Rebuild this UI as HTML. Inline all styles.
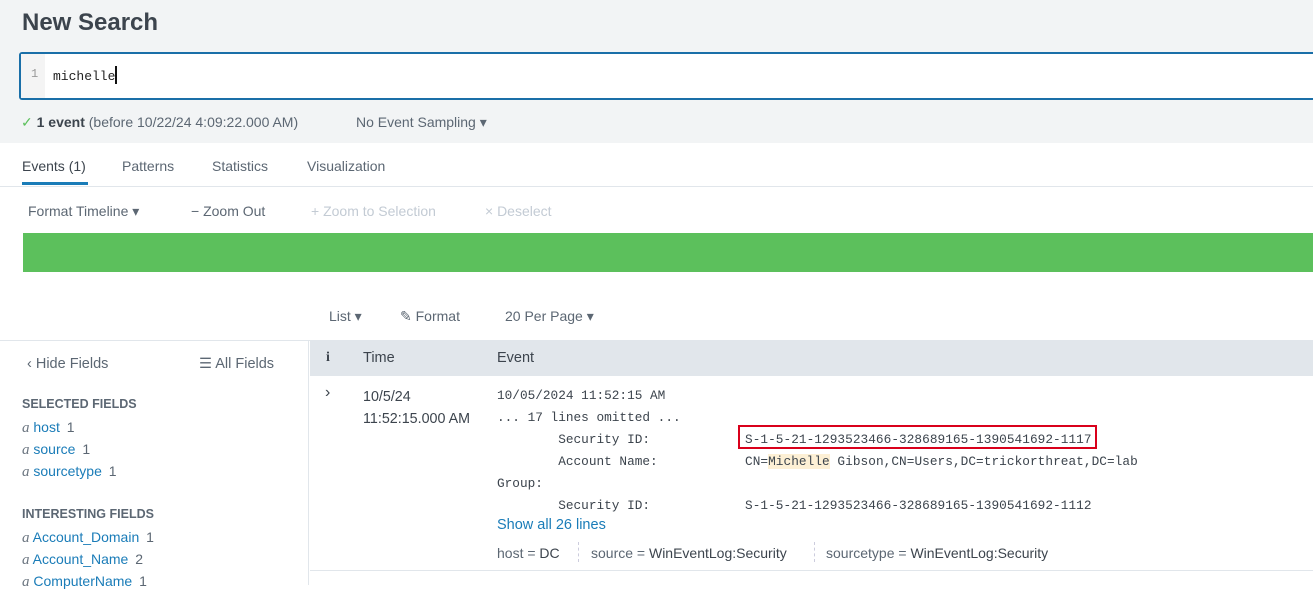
<!DOCTYPE html>
<html><head><meta charset="utf-8"><style>
*{margin:0;padding:0;box-sizing:border-box}
body{width:1313px;height:585px;overflow:hidden;background:#fff;font-family:"Liberation Sans",sans-serif;color:#3c444d;position:relative}
.a{position:absolute;white-space:nowrap}
.mono{font-family:"Liberation Mono",monospace;font-size:12.85px;color:#3c444d}
.link{color:#1a7cb8}
.ai{font-family:"Liberation Serif",serif;font-style:italic;color:#6b7580;font-size:15px}
.c{color:#5c6773;margin-left:3px}
</style></head><body>
<div class="a" style="left:0;top:0;width:1313px;height:143px;background:#f2f4f5"></div>
<div class="a" style="left:22px;top:9px;font-size:24px;font-weight:bold;color:#3c444d">New Search</div>
<div class="a" style="left:19px;top:52px;width:1300px;height:48px;background:#fff;border:2px solid #1a6fa8;border-radius:3px"></div>
<div class="a" style="left:21px;top:54px;width:24px;height:44px;background:#f4f4f4"></div>
<div class="a mono" style="left:31px;top:67px;color:#999;font-size:12px">1</div>
<div class="a mono" style="left:53px;top:66px;font-size:13px;color:#222">michelle<span style="display:inline-block;width:2px;height:18px;background:#111;vertical-align:-4px"></span></div>
<div class="a" style="left:21px;top:114px;font-size:14px;color:#5c6773"><span style="color:#5cc05c">✓</span> <b style="color:#3c444d">1 event</b> (before 10/22/24 4:09:22.000 AM)</div>
<div class="a" style="left:356px;top:114px;font-size:14px;color:#5c6773">No Event Sampling ▾</div>
<div class="a" style="left:22px;top:158px;font-size:14px;color:#3c444d">Events (1)</div>
<div class="a" style="left:22px;top:182px;width:66px;height:3px;background:#1a7cb8"></div>
<div class="a" style="left:122px;top:158px;font-size:14px;color:#5c6773">Patterns</div>
<div class="a" style="left:212px;top:158px;font-size:14px;color:#5c6773">Statistics</div>
<div class="a" style="left:307px;top:158px;font-size:14px;color:#5c6773">Visualization</div>
<div class="a" style="left:0;top:186px;width:1313px;height:1px;background:#e1e6eb"></div>
<div class="a" style="left:28px;top:203px;font-size:14px;color:#5c6773">Format Timeline ▾</div>
<div class="a" style="left:191px;top:203px;font-size:14px;color:#5c6773">− Zoom Out</div>
<div class="a" style="left:311px;top:203px;font-size:14px;color:#c3cbd4">+ Zoom to Selection</div>
<div class="a" style="left:485px;top:203px;font-size:14px;color:#c3cbd4">× Deselect</div>
<div class="a" style="left:23px;top:233px;width:1290px;height:39px;background:#5cc05c"></div>
<div class="a" style="left:329px;top:308px;font-size:14px;color:#5c6773">List ▾</div>
<div class="a" style="left:400px;top:308px;font-size:14px;color:#5c6773">✎ Format</div>
<div class="a" style="left:505px;top:308px;font-size:14px;color:#5c6773">20 Per Page ▾</div>
<div class="a" style="left:0;top:340px;width:1313px;height:1px;background:#e1e6eb"></div>
<div class="a" style="left:308px;top:340px;width:1px;height:245px;background:#e1e6eb"></div>
<div class="a" style="left:27px;top:356px;font-size:14.5px;color:#5c6773">‹ Hide Fields</div>
<div class="a" style="left:199px;top:356px;font-size:14.5px;color:#5c6773">☰ All Fields</div>
<div class="a" style="left:22px;top:397px;font-size:12.5px;font-weight:bold;color:#5c6773">SELECTED FIELDS</div>
<div class="a" style="left:22px;top:419px;font-size:14px"><span class="ai">a</span> <span class="link">host</span> <span class="c">1</span></div>
<div class="a" style="left:22px;top:441px;font-size:14px"><span class="ai">a</span> <span class="link">source</span> <span class="c">1</span></div>
<div class="a" style="left:22px;top:463px;font-size:14px"><span class="ai">a</span> <span class="link">sourcetype</span> <span class="c">1</span></div>
<div class="a" style="left:22px;top:507px;font-size:12.5px;font-weight:bold;color:#5c6773">INTERESTING FIELDS</div>
<div class="a" style="left:22px;top:529px;font-size:14px"><span class="ai">a</span> <span class="link">Account_Domain</span> <span class="c">1</span></div>
<div class="a" style="left:22px;top:551px;font-size:14px"><span class="ai">a</span> <span class="link">Account_Name</span> <span class="c">2</span></div>
<div class="a" style="left:22px;top:573px;font-size:14px"><span class="ai">a</span> <span class="link">ComputerName</span> <span class="c">1</span></div>
<div class="a" style="left:310px;top:341px;width:1003px;height:35px;background:#e1e6eb"></div>
<div class="a" style="left:326px;top:350px;font-size:14px;font-weight:bold;font-family:'Liberation Serif',serif;color:#3c444d">i</div>
<div class="a" style="left:363px;top:350px;font-size:14.5px;color:#3c444d">Time</div>
<div class="a" style="left:497px;top:350px;font-size:14.5px;color:#3c444d">Event</div>
<div class="a" style="left:325px;top:384px;font-size:16px;color:#3c444d">›</div>
<div class="a" style="left:363px;top:386px;font-size:14.3px;color:#3c444d;line-height:22px">10/5/24<br>11:52:15.000 AM</div>
<div class="a mono" style="left:497px;top:385px;line-height:22px;white-space:pre;font-size:12.75px">10/05/2024 11:52:15 AM
... 17 lines omitted ...
        Security ID:</div>
<div class="a mono" style="left:497px;top:451px;line-height:22px;white-space:pre;font-size:12.75px">        Account Name:
Group:
        Security ID:</div>
<div class="a mono" style="left:745px;top:429px;line-height:22px;white-space:pre;font-size:12.75px;letter-spacing:0.05px">S-1-5-21-1293523466-328689165-1390541692-1117
CN=<span style="background:#fdf0d5">Michelle</span> Gibson,CN=Users,DC=trickorthreat,DC=lab

S-1-5-21-1293523466-328689165-1390541692-1112</div>
<div class="a" style="left:738px;top:425px;width:359px;height:24px;border:2px solid #d9001b"></div>
<div class="a link" style="left:497px;top:517px;font-size:14.5px">Show all 26 lines</div>
<div class="a" style="left:497px;top:545px;font-size:14px;color:#5c6773">host = <span style="color:#3c444d">DC</span></div>
<div class="a" style="left:578px;top:542px;width:0;height:20px;border-left:1px dashed #ccd"></div>
<div class="a" style="left:591px;top:545px;font-size:14px;color:#5c6773">source = <span style="color:#3c444d">WinEventLog:Security</span></div>
<div class="a" style="left:814px;top:542px;width:0;height:20px;border-left:1px dashed #ccd"></div>
<div class="a" style="left:826px;top:545px;font-size:14px;color:#5c6773">sourcetype = <span style="color:#3c444d">WinEventLog:Security</span></div>
<div class="a" style="left:310px;top:570px;width:1003px;height:1px;background:#e1e6eb"></div>
</body></html>
